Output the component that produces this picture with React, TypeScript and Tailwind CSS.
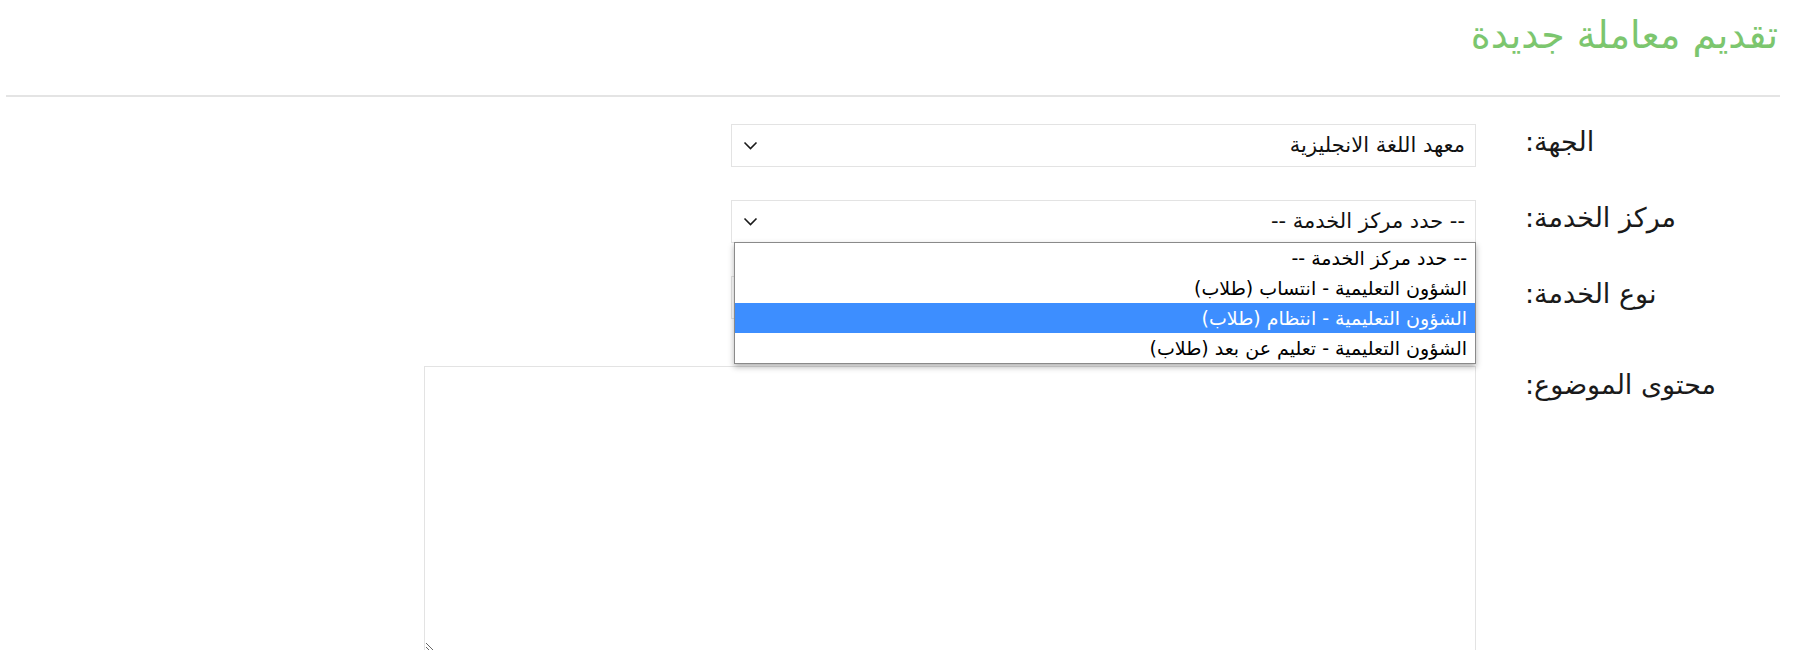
import React from "react";

const options = [
  "-- حدد مركز الخدمة --",
  "الشؤون التعليمية - انتساب (طلاب)",
  "الشؤون التعليمية - انتظام (طلاب)",
  "الشؤون التعليمية - تعليم عن بعد (طلاب)",
];

function Chevron() {
  return (
    <svg width="15" height="9" viewBox="0 0 15 9" className="shrink-0">
      <path d="M1.5 1.5l6 6 6-6" stroke="#1a1a1a" strokeWidth="1.6" fill="none" />
    </svg>
  );
}

function FakeSelect({ value, children }: { value: string; children?: React.ReactNode }) {
  return (
    <div className="relative w-[745px]">
      <div className="flex h-[43px] items-center justify-between border border-[#e3e3e3] bg-white pr-[10px] pl-[11px]">
        <span className="text-[21px] leading-none text-[#111]">{value}</span>
        <Chevron />
      </div>
      {children}
    </div>
  );
}

function Label({ text }: { text: string }) {
  return (
    <div className="w-[255px] shrink-0 text-left text-[27px] leading-none text-[#1a1a1a]">
      {text}
    </div>
  );
}

export default function App() {
  return (
    <div
      dir="rtl"
      className="min-h-[650px] bg-white pl-[6px] pr-[20px] pt-[12px]"
      style={{ fontFamily: '"DejaVu Sans", "Noto Sans", sans-serif' }}
    >
      {/* Page title */}
      <h1 className="pr-[2px] text-[38px] leading-[46px] text-[#7cc66e]">تقديم معاملة جديدة</h1>

      <div className="mt-[37px] h-[2px] bg-[#e4e4e4]"></div>

      <div className="mt-[27px]">
        {/* الجهة */}
        <div className="flex items-start">
          <div className="pt-[4px]"><Label text="الجهة:" /></div>
          <div className="mr-[49px]">
            <FakeSelect value="معهد اللغة الانجليزية" />
          </div>
        </div>

        {/* مركز الخدمة */}
        <div className="relative z-10 mt-[33px] flex items-start">
          <div className="pt-[4px]"><Label text="مركز الخدمة:" /></div>
          <div className="mr-[49px]">
            <FakeSelect value="-- حدد مركز الخدمة --">
              <div className="absolute top-[42px] right-0 left-[3px] border border-[#8a8a8a] bg-white shadow-[0_3px_6px_rgba(0,0,0,0.3)]">
                {options.map((o, i) => (
                  <div
                    key={o}
                    className={
                      i === 2
                        ? "h-[30px] bg-[#3d8eff] pr-[8px] text-[19px] leading-[30px] text-white"
                        : "h-[30px] pr-[8px] text-[19px] leading-[30px] text-black"
                    }
                  >
                    {o}
                  </div>
                ))}
              </div>
            </FakeSelect>
          </div>
        </div>

        {/* نوع الخدمة */}
        <div className="mt-[33px] flex items-start">
          <div className="pt-[4px]"><Label text="نوع الخدمة:" /></div>
          <div className="mr-[49px]">
            <FakeSelect value="" />
          </div>
        </div>

        {/* محتوى الموضوع */}
        <div className="mt-[47px] flex items-start">
          <div className="pt-[5px]"><Label text="محتوى الموضوع:" /></div>
          <div className="mr-[49px]">
            <textarea className="block h-[286px] w-[1052px] border border-[#e3e3e3] bg-white outline-none"></textarea>
          </div>
        </div>
      </div>
    </div>
  );
}
